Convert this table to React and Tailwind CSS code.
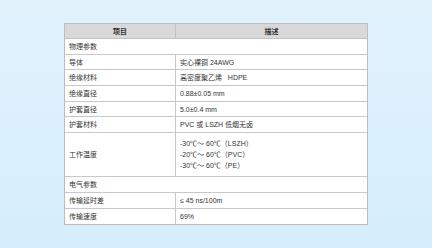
import React from "react";

const rows = [
  { h: "h-[16px]", a: "物理参数", span: true },
  { h: "h-[15px]", a: "导体", b: ["实心裸铜 24AWG"] },
  { h: "h-[16px]", a: "绝缘材料", b: ["高密度聚乙烯\u00a0\u00a0 HDPE"] },
  { h: "h-[16px]", a: "绝缘直径", b: ["0.88±0.05 mm"] },
  { h: "h-[15px]", a: "护套直径", b: ["5.0±0.4 mm"] },
  { h: "h-[16px]", a: "护套材料", b: ["PVC 或 LSZH 低烟无卤"] },
  { h: "h-[44px]", a: "工作温度", b: ["-30℃～ 60℃（LSZH）", "-20℃～ 60℃（PVC）", "-30℃～ 60℃（PE）"] },
  { h: "h-[16px]", a: "电气参数", span: true },
  { h: "h-[16px]", a: "传输延时差", b: ["≤ 45 ns/100m"] },
  { h: "h-[15px]", a: "传输速度", b: ["69%"] },
];

export default function App() {
  return (
    <div
      className="w-[432px] h-[248px] bg-gradient-to-b from-[#e1f2fd] to-[#d5edfc] pt-[23px] pl-[64px] text-[#333333] text-[7px] leading-none"
      style={{ fontFamily: '"Liberation Sans", "Noto Sans CJK SC", sans-serif' }}
    >
      <div className="w-[304px] border border-[#bdbdbd] bg-white shadow-[0_1px_0_#e8e8e8]">
        <div className="flex h-[15px] bg-[#d9d9d9] border-b border-[#c2c2c2] font-bold">
          <div className="w-[111px] border-r border-[#c2c2c2] flex items-center justify-center">项目</div>
          <div className="flex-1 flex items-center justify-center">描述</div>
        </div>
        {rows.map((r, i) => (
          <div
            key={i}
            className={`flex ${r.h} ${i < rows.length - 1 ? "border-b border-[#c8c8c8]" : ""}`}
          >
            {r.span ? (
              <div className="flex-1 flex items-center pl-[4px]">{r.a}</div>
            ) : (
              <>
                <div className="w-[111px] border-r border-[#c8c8c8] flex items-center pl-[4px]">{r.a}</div>
                <div className="flex-1 flex flex-col justify-center gap-[4px] pl-[4px]">
                  {r.b.map((t, j) => (
                    <div key={j} className="whitespace-pre">{t}</div>
                  ))}
                </div>
              </>
            )}
          </div>
        ))}
      </div>
    </div>
  );
}
